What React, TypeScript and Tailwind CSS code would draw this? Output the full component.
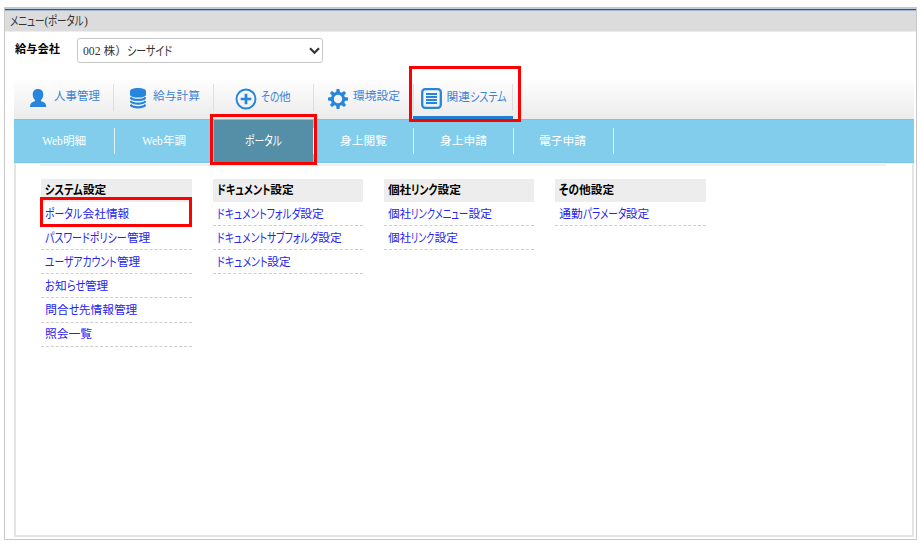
import { useLayoutEffect, useRef } from 'react';
import type { ReactNode } from 'react';

/* Label set in a proportional-kana style: kanji keep their width, kana are condensed to fit `w`. */
function Label({ text, w, className = '' }: { text: string; w: number; className?: string }) {
  const ref = useRef<HTMLSpanElement>(null);
  const runs = text.match(/[ぁ-んァ-ヶー]+|[^ぁ-んァ-ヶー]+/g) ?? [];

  useLayoutEffect(() => {
    const root = ref.current;
    if (!root) return;
    const outers = Array.from(root.children) as HTMLElement[];
    const inner = outers.map((o) => o.firstElementChild as HTMLElement);
    inner.forEach((i) => (i.style.transform = 'none'));
    const widths = inner.map((i) => i.getBoundingClientRect().width);
    const isKana = outers.map((o) => o.dataset.kana === '1');
    const anyKana = isKana.some(Boolean);
    const fixed = widths.reduce((s, v, i) => s + (anyKana && !isKana[i] ? v : 0), 0);
    const flexible = widths.reduce((s, v, i) => s + (anyKana && !isKana[i] ? 0 : v), 0);
    const scale = (w - fixed) / flexible;
    outers.forEach((o, i) => {
      const k = anyKana && !isKana[i] ? 1 : scale;
      o.style.width = `${widths[i] * k}px`;
      inner[i].style.transform = `scaleX(${k})`;
    });
  }, [text, w]);

  return (
    <span ref={ref} className={`inline-flex shrink-0 items-baseline whitespace-pre ${className}`} style={{ width: w }}>
      {runs.map((r, i) => {
        const kana = /[ぁ-んァ-ヶー]/.test(r);
        return (
          <span key={i} data-kana={kana ? '1' : '0'} className="inline-block shrink-0">
            <span className={`inline-block origin-left ${kana ? "text-[12.700px] leading-4 [font-feature-settings:'palt']" : ''}`}>
              {r}
            </span>
          </span>
        );
      })}
    </span>
  );
}

const userIcon = (
  <svg width="18" height="20" viewBox="0 0 18 20" fill="#2786dc">
    <path d="M9 1c3.200 0 5.300 2.100 5.300 5.300 0 2.600-1 4.700-2.300 5.800v1.100c3.300.8 5.200 2.200 5.200 5.800H1c0-3.600 1.900-5 5-5.800v-1.100C4.700 11 3.700 8.900 3.700 6.300 3.700 3.100 5.800 1 9 1z" />
  </svg>
);

const databaseIcon = (
  <svg width="16" height="21" viewBox="0 0 16 21">
    <path fill="#2786dc" d="M0 3.200C0 1.300 3.400 0 8 0s8 1.300 8 3.200v4C15 8.700 12 9.500 8 9.500S1 8.700 0 7.200z" />
    <path fill="none" stroke="#2786dc" strokeWidth="2.300" d="M.4 9.300c1.100 1.800 4 2.600 7.600 2.600s6.500-.8 7.600-2.600M.4 13c1.100 1.800 4 2.600 7.600 2.600s6.500-.8 7.600-2.600M.4 16.700c1.100 1.800 4 2.600 7.600 2.600s6.500-.8 7.600-2.600" />
  </svg>
);

const plusIcon = (
  <svg width="22" height="22" viewBox="0 0 22 22" fill="none" stroke="#2786dc">
    <circle cx="11" cy="11" r="9.500" strokeWidth="1.900" />
    <path d="M11 5.700v10.600M5.700 11h10.600" strokeWidth="2.700" />
  </svg>
);

const gearIcon = (
  <svg width="20" height="20" viewBox="0 0 20 20">
    <circle cx="10" cy="10" r="5.700" fill="none" stroke="#2786dc" strokeWidth="3" />
    {[0, 45, 90, 135, 180, 225, 270, 315].map((a) => (
      <path key={a} d="M8 4L8.600 0h2.800l.6 4z" fill="#2786dc" transform={`rotate(${a} 10 10)`} />
    ))}
  </svg>
);

const listIcon = (
  <svg width="21" height="21" viewBox="0 0 21 21" fill="none" stroke="#2786dc">
    <rect x="1.200" y="1.200" width="18.600" height="18.600" rx="3" strokeWidth="2.300" />
    <path d="M5 6h11M5 9h11M5 12h11M5 15h11" strokeWidth="1.900" />
  </svg>
);

type Tab = { text: string; w: number; icon: ReactNode; pad: string; gap: string; drop: string; label: string };

const tabs: Tab[] = [
  { text: '人事管理', w: 46, icon: userIcon, pad: 'pl-[15px]', gap: 'gap-[7px]', drop: 'pt-[10px]', label: 'mt-[1px]' },
  { text: '給与計算', w: 47, icon: databaseIcon, pad: 'pl-4', gap: 'gap-[7px]', drop: 'pt-[10px]', label: 'mt-[1px]' },
  { text: 'その他', w: 30, icon: plusIcon, pad: 'pl-[21px]', gap: 'gap-1', drop: 'pt-[10px]', label: 'mt-[1px]' },
  { text: '環境設定', w: 47, icon: gearIcon, pad: 'pl-[14px]', gap: 'gap-[5px]', drop: 'pt-[11px]', label: '' },
  { text: '関連システム', w: 60, icon: listIcon, pad: 'pl-[7px]', gap: 'gap-[5px]', drop: 'pt-[10px]', label: 'mt-[1px]' },
];

const subTabs = [
  { text: 'Web明細', w: 44 },
  { text: 'Web年調', w: 44 },
  { text: 'ポータル', w: 37 },
  { text: '身上閲覧', w: 47 },
  { text: '身上申請', w: 47 },
  { text: '電子申請', w: 47 },
];

const columns = [
  {
    title: 'システム設定', w: 61,
    links: [
      ['ポータル会社情報', 84], ['パスワードポリシー管理', 105], ['ユーザアカウント管理', 95],
      ['お知らせ管理', 63], ['問合せ先情報管理', 92], ['照会一覧', 47],
    ],
  },
  {
    title: 'ドキュメント設定', w: 77,
    links: [['ドキュメントフォルダ設定', 107], ['ドキュメントサブフォルダ設定', 125], ['ドキュメント設定', 74]],
  },
  { title: '個社リンク設定', w: 73, links: [['個社リンクメニュー設定', 104], ['個社リンク設定', 70]] },
  { title: 'その他設定', w: 55, links: [['通勤パラメータ設定', 90]] },
] as { title: string; w: number; links: [string, number][] }[];

export default function App() {
  return (
    <div className="h-[542px] w-[920px] overflow-hidden bg-white pl-1 pt-[7px] text-[11.700px] leading-4 [font-family:'Liberation_Serif','Noto_Sans_CJK_JP',sans-serif]">
      <div className="flex h-[533px] w-[913px] flex-col border border-[#c8c8c8]">
        <div className="h-px shrink-0 bg-[#c3cbd3]" />
        <div className="h-px shrink-0 bg-[#255b9b]" />
        <div className="h-px shrink-0 bg-[#9eb5cf]" />
        <header className="flex h-[21px] shrink-0 items-center border-b border-[#ececec] bg-[#dcdcdc] pl-[5px] text-[#333]">
          <Label text="メニュー(ポータル)" w={78} />
        </header>

        <div className="flex h-[46px] shrink-0 items-start pl-[10px] pt-[6px]">
          <Label text="給与会社" w={45} className="mt-[4px] font-bold text-black" />
          <button className="ml-[17px] flex h-[25px] w-[246px] items-center justify-between rounded-[3px] border border-[#c8c8c8] bg-white pl-[5px] pr-[2px] text-[#333]">
            <Label text="002 株）シーサイド" w={89} className="mt-[1px]" />
            <svg width="11" height="8" viewBox="0 0 11 8" fill="none" stroke="#333" strokeWidth="2.200">
              <path d="M1 1.300l4.500 4.500L10 1.300" />
            </svg>
          </button>
        </div>

        <main className="ml-[9px] flex w-[900px] grow flex-col">
          <nav className="flex h-[41px] shrink-0 bg-gradient-to-b from-white to-[#ebebeb]">
            {tabs.map((t, i) => (
              <div key={t.text} className={`relative flex h-[41px] w-[99.900px] items-start ${t.drop} ${t.pad} ${t.gap}`}>
                <span className="flex w-fit shrink-0 items-center">{t.icon}</span>
                <Label text={t.text} w={t.w} className={`text-[#3e83d8] ${t.label}`} />
                <span className="absolute right-0 top-[6px] h-[27px] w-px bg-[#dedede]" />
                {i === 4 && (
                  <>
                    <span className="absolute right-0 bottom-0 h-[3px] w-[100px] bg-[#2180d2]" />
                    <span className="absolute -left-[5px] -top-[12px] h-[56px] w-[112px] border-[3px] border-[#ff0000]" />
                  </>
                )}
              </div>
            ))}
          </nav>

          <nav className="flex h-11 shrink-0 border-y border-[#76c7e7] bg-[#82cdec] text-white">
            {subTabs.map((t, i) => (
              <div
                key={t.text}
                className={`relative flex h-[42px] w-[99.800px] items-center justify-center ${i === 2 ? 'bg-[#548ea7]' : ''}`}
              >
                <Label text={t.text} w={t.w} className="mt-[1px]" />
                <span className={`absolute -right-px top-2 h-[26px] w-px bg-[#e0f3fb]`} />
                {i === 2 && <span className="absolute -left-[4px] -top-[6px] z-10 h-[51px] w-[107px] border-[3px] border-[#ff0000]" />}
              </div>
            ))}
          </nav>

          <section className="mb-[2px] w-[900px] grow border-x-2 border-b-2 border-[#e4e4e4] pl-6 pt-px">
            <div className="h-[2px] w-[846px] bg-[#f0f0f0]" />
            <div className="ml-[1.300px] mt-[13px] flex gap-[20.800px]">
              {columns.map((c, ci) => (
                <div key={c.title} className="w-[150.500px]">
                  <h2 className="flex h-[22.600px] items-center bg-[#ededed] pl-1 font-bold text-black">
                    <Label text={c.title} w={c.w} className="mt-[1px]" />
                  </h2>
                  <ul>
                    {c.links.map(([text, w], li) => (
                      <li key={text} className="relative flex h-[24.200px] items-center border-b border-dashed border-[#cecece] pl-1 text-[#2424ee]">
                        <Label text={text} w={w} className="mt-[2px]" />
                        {ci === 0 && li === 0 && (
                          <span className="absolute -left-px -top-[4.500px] h-[30px] w-[152px] border-[3px] border-[#ff0000]" />
                        )}
                      </li>
                    ))}
                  </ul>
                </div>
              ))}
            </div>
          </section>
        </main>
      </div>
    </div>
  );
}
